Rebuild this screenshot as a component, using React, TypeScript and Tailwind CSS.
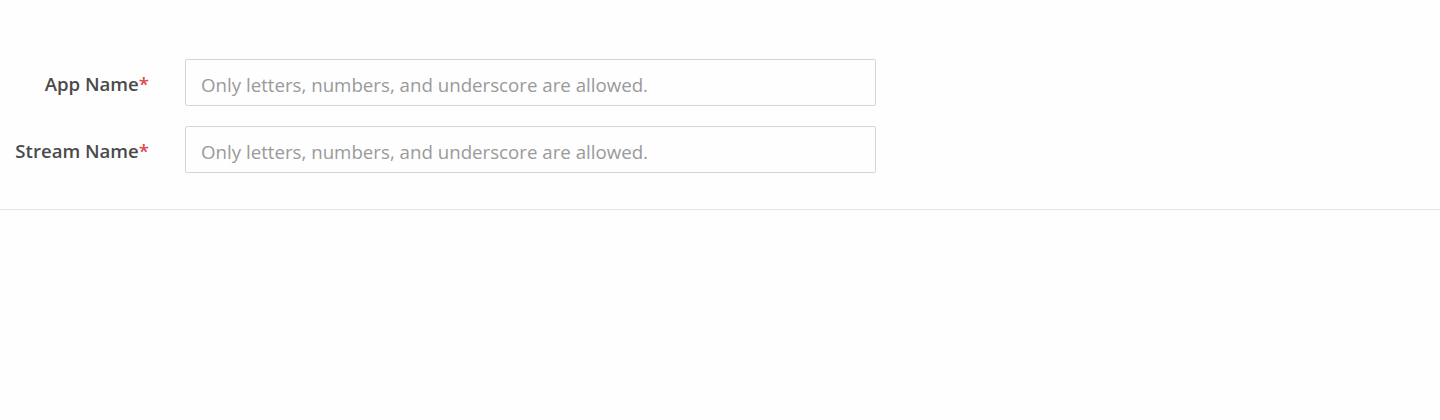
export default function App() {
    const fields = ["App Name", "Stream Name"];
    return (
        <div className="min-h-[420px] bg-[#fefefe] font-['Open_Sans',sans-serif]">
            <div className="pt-[59px] pb-[36px] border-b border-[#e5e5e5] flex flex-col gap-[20px]">
                {fields.map((name) => (
                    <div key={name} className="flex items-center">
                        <label className="w-[149px] pt-[3px] text-right text-[18.6px] font-semibold text-[#4a4a4a] shrink-0">
                            {name}
                            <span className="text-[#e0474c]">*</span>
                        </label>
                        <input
                            type="text"
                            placeholder="Only letters, numbers, and underscore are allowed."
                            className="ml-[36px] w-[691px] h-[47px] border border-[#d4d4dc] rounded-[2px] px-[15px] pt-[3px] text-[18.7px] text-[#333] placeholder:text-[#9a9a9a] outline-none"
                        />
                    </div>
                ))}
            </div>
        </div>
    );
}
